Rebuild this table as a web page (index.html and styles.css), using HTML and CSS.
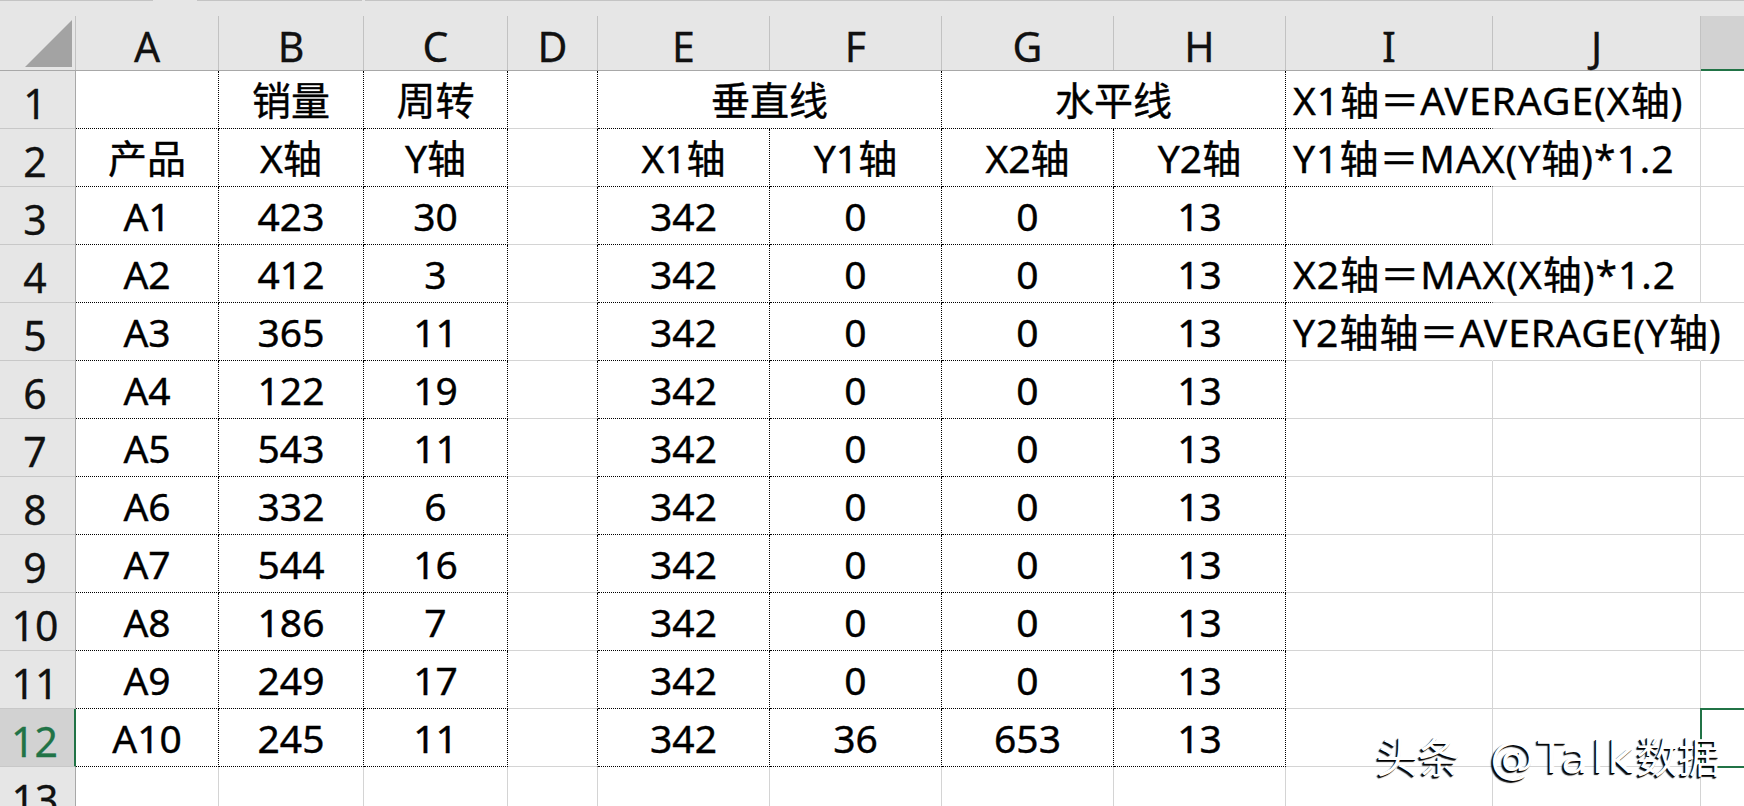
FILE: index.html
```html
<!DOCTYPE html>
<html lang="zh-CN">
<head>
<meta charset="utf-8">
<title>Sheet</title>
<link rel="stylesheet" href="styles.css">
</head>
<body>
<div class="topline"><span class="seg seg1"></span><span class="gap gap1"></span><span class="seg seg2"></span><span class="gap gap2"></span><span class="seg seg3"></span></div>
<div class="sheet">
  <div class="h"><div class="in corner"><svg width="75" height="54" viewBox="0 0 75 54"><polygon points="72,4 72,51 25,51" fill="#a3a3a3"/></svg></div></div>
  <div class="h"><div class="in">A</div></div>
  <div class="h"><div class="in">B</div></div>
  <div class="h"><div class="in">C</div></div>
  <div class="h"><div class="in">D</div></div>
  <div class="h"><div class="in">E</div></div>
  <div class="h"><div class="in">F</div></div>
  <div class="h"><div class="in">G</div></div>
  <div class="h"><div class="in">H</div></div>
  <div class="h"><div class="in">I</div></div>
  <div class="h"><div class="in">J</div></div>
  <div class="h kh"><div class="in"></div></div>

  <div class="rh">1</div>
  <div class="c dr db"></div>
  <div class="c dr db">销量</div>
  <div class="c dr db">周转</div>
  <div class="c dr"></div>
  <div class="c m2 dr db">垂直线</div>
  <div class="c m2 dr db">水平线</div>
  <div class="c db nr l">X1轴＝AVERAGE(X轴)</div>
  <div class="c"></div>
  <div class="c"></div>

  <div class="rh">2</div>
  <div class="c dr db">产品</div>
  <div class="c dr db">X轴</div>
  <div class="c dr db">Y轴</div>
  <div class="c dr"></div>
  <div class="c dr db">X1轴</div>
  <div class="c dr db">Y1轴</div>
  <div class="c dr db">X2轴</div>
  <div class="c dr db">Y2轴</div>
  <div class="c db nr l">Y1轴＝MAX(Y轴)*1.2</div>
  <div class="c"></div>
  <div class="c"></div>

  <div class="rh">3</div>
  <div class="c dr db">A1</div>
  <div class="c dr db">423</div>
  <div class="c dr db">30</div>
  <div class="c dr"></div>
  <div class="c dr db">342</div>
  <div class="c dr db">0</div>
  <div class="c dr db">0</div>
  <div class="c dr db">13</div>
  <div class="c db"></div>
  <div class="c"></div>
  <div class="c"></div>

  <div class="rh">4</div>
  <div class="c dr db">A2</div>
  <div class="c dr db">412</div>
  <div class="c dr db">3</div>
  <div class="c dr"></div>
  <div class="c dr db">342</div>
  <div class="c dr db">0</div>
  <div class="c dr db">0</div>
  <div class="c dr db">13</div>
  <div class="c db nr l">X2轴＝MAX(X轴)*1.2</div>
  <div class="c"></div>
  <div class="c"></div>

  <div class="rh">5</div>
  <div class="c dr db">A3</div>
  <div class="c dr db">365</div>
  <div class="c dr db">11</div>
  <div class="c dr"></div>
  <div class="c dr db">342</div>
  <div class="c dr db">0</div>
  <div class="c dr db">0</div>
  <div class="c dr db">13</div>
  <div class="c nr l">Y2轴轴＝AVERAGE(Y轴)</div>
  <div class="c nr"></div>
  <div class="c"></div>

  <div class="rh">6</div>
  <div class="c dr db">A4</div>
  <div class="c dr db">122</div>
  <div class="c dr db">19</div>
  <div class="c dr"></div>
  <div class="c dr db">342</div>
  <div class="c dr db">0</div>
  <div class="c dr db">0</div>
  <div class="c dr db">13</div>
  <div class="c"></div>
  <div class="c"></div>
  <div class="c"></div>

  <div class="rh">7</div>
  <div class="c dr db">A5</div>
  <div class="c dr db">543</div>
  <div class="c dr db">11</div>
  <div class="c dr"></div>
  <div class="c dr db">342</div>
  <div class="c dr db">0</div>
  <div class="c dr db">0</div>
  <div class="c dr db">13</div>
  <div class="c"></div>
  <div class="c"></div>
  <div class="c"></div>

  <div class="rh">8</div>
  <div class="c dr db">A6</div>
  <div class="c dr db">332</div>
  <div class="c dr db">6</div>
  <div class="c dr"></div>
  <div class="c dr db">342</div>
  <div class="c dr db">0</div>
  <div class="c dr db">0</div>
  <div class="c dr db">13</div>
  <div class="c"></div>
  <div class="c"></div>
  <div class="c"></div>

  <div class="rh">9</div>
  <div class="c dr db">A7</div>
  <div class="c dr db">544</div>
  <div class="c dr db">16</div>
  <div class="c dr"></div>
  <div class="c dr db">342</div>
  <div class="c dr db">0</div>
  <div class="c dr db">0</div>
  <div class="c dr db">13</div>
  <div class="c"></div>
  <div class="c"></div>
  <div class="c"></div>

  <div class="rh">10</div>
  <div class="c dr db">A8</div>
  <div class="c dr db">186</div>
  <div class="c dr db">7</div>
  <div class="c dr"></div>
  <div class="c dr db">342</div>
  <div class="c dr db">0</div>
  <div class="c dr db">0</div>
  <div class="c dr db">13</div>
  <div class="c"></div>
  <div class="c"></div>
  <div class="c"></div>

  <div class="rh">11</div>
  <div class="c dr db">A9</div>
  <div class="c dr db">249</div>
  <div class="c dr db">17</div>
  <div class="c dr"></div>
  <div class="c dr db">342</div>
  <div class="c dr db">0</div>
  <div class="c dr db">0</div>
  <div class="c dr db">13</div>
  <div class="c"></div>
  <div class="c"></div>
  <div class="c"></div>

  <div class="rh rsel">12</div>
  <div class="c dr db">A10</div>
  <div class="c dr db">245</div>
  <div class="c dr db">11</div>
  <div class="c dr"></div>
  <div class="c dr db">342</div>
  <div class="c dr db">36</div>
  <div class="c dr db">653</div>
  <div class="c dr db">13</div>
  <div class="c"></div>
  <div class="c"></div>
  <div class="c csel"></div>

  <div class="rh">13</div>
  <div class="c"></div>
  <div class="c"></div>
  <div class="c"></div>
  <div class="c"></div>
  <div class="c"></div>
  <div class="c"></div>
  <div class="c"></div>
  <div class="c"></div>
  <div class="c"></div>
  <div class="c"></div>
  <div class="c"></div>
</div>
<div class="wm"><span class="wm-cjk">头条</span><span class="wm-lat">@Talk</span><span class="wm-cjk">数据</span></div>
</body>
</html>
```

FILE: styles.css
```css
* { box-sizing: border-box; }
html, body { margin: 0; padding: 0; }
body {
  width: 1744px;
  height: 806px;
  overflow: hidden;
  background: #fff;
  color: #000;
  font-family: "Noto Sans", "Noto Sans CJK SC", sans-serif;
  position: relative;
}

.topline { display: flex; width: 1744px; height: 1px; background: #e6e6e6; }
.topline .seg { height: 1px; background: #c4c4c4; }
.seg1 { width: 153px; }
.gap1 { width: 44px; }
.seg2 { width: 165px; }
.gap2 { width: 3px; }
.seg3 { flex: 1; }

.sheet {
  display: grid;
  width: 1744px;
  height: 805px;
  overflow: hidden;
  grid-template-columns: 76px 143px 145px 144px 90px 172px 172px 172px 172px 207px 208px 209px;
  grid-template-rows: 70px;
  grid-auto-rows: 58px;
}

/* column headers */
.h { background: #e6e6e6; border-bottom: 1px solid #a8a8a8; }
.h .in {
  margin-top: 15px;
  height: 54px;
  border-right: 1px solid #c2c2c2;
  padding-top: 6px;
  line-height: 48px;
  font-size: 41px;
  text-align: center;
  color: #111;
  -webkit-text-stroke: 0.3px #111;
}
.h .corner { padding: 0; line-height: 0; }
.h .corner svg { display: block; }
.kh { border-bottom-color: #217346; }
.kh .in { background: #d2d2d2; border-bottom: 1px solid #217346; }

/* row headers */
.rh {
  background: #e6e6e6;
  border-right: 1px solid #a8a8a8;
  border-bottom: 1px solid #c8c8c8;
  font-size: 41px;
  padding: 7px 5px 0 0;
  line-height: 50px;
  text-align: center;
  color: #111;
  -webkit-text-stroke: 0.3px #111;
}
.rsel { background: #d2d2d2; color: #217346; border-right: 2px solid #217346; -webkit-text-stroke: 0.3px #217346; }

/* cells */
.c {
  border-right: 1px solid #d4d4d4;
  border-bottom: 1px solid #d4d4d4;
  font-size: 39px;
  line-height: 57px;
  text-align: center;
  white-space: nowrap;
  -webkit-text-stroke: 0.4px #000;
}
.dr { border-right: 1px dotted #000; }
.db { border-bottom: 1px dotted #000; }
.nr { border-right-color: transparent; }
.l { text-align: left; padding-left: 7px; letter-spacing: 1px; }
.m2 { grid-column: span 2; }
.csel { border: 1px solid #217346; box-shadow: 0 0 0 1px #217346; }

/* watermark */
.wm {
  position: absolute;
  left: 1376px;
  top: 732px;
  white-space: nowrap;
  font-family: "DejaVu Sans", "Noto Sans CJK SC", sans-serif;
  font-size: 42px;
  line-height: 46px;
  color: #fff;
  text-shadow: -2px 2px 1px rgba(0, 0, 0, 0.9), -1px 1px 0 #000;
}
.wm-cjk { font-family: "Noto Sans CJK SC", sans-serif; font-size: 42px; }
.wm-lat { font-size: 45px; letter-spacing: 3px; margin-left: 30px; }
```
